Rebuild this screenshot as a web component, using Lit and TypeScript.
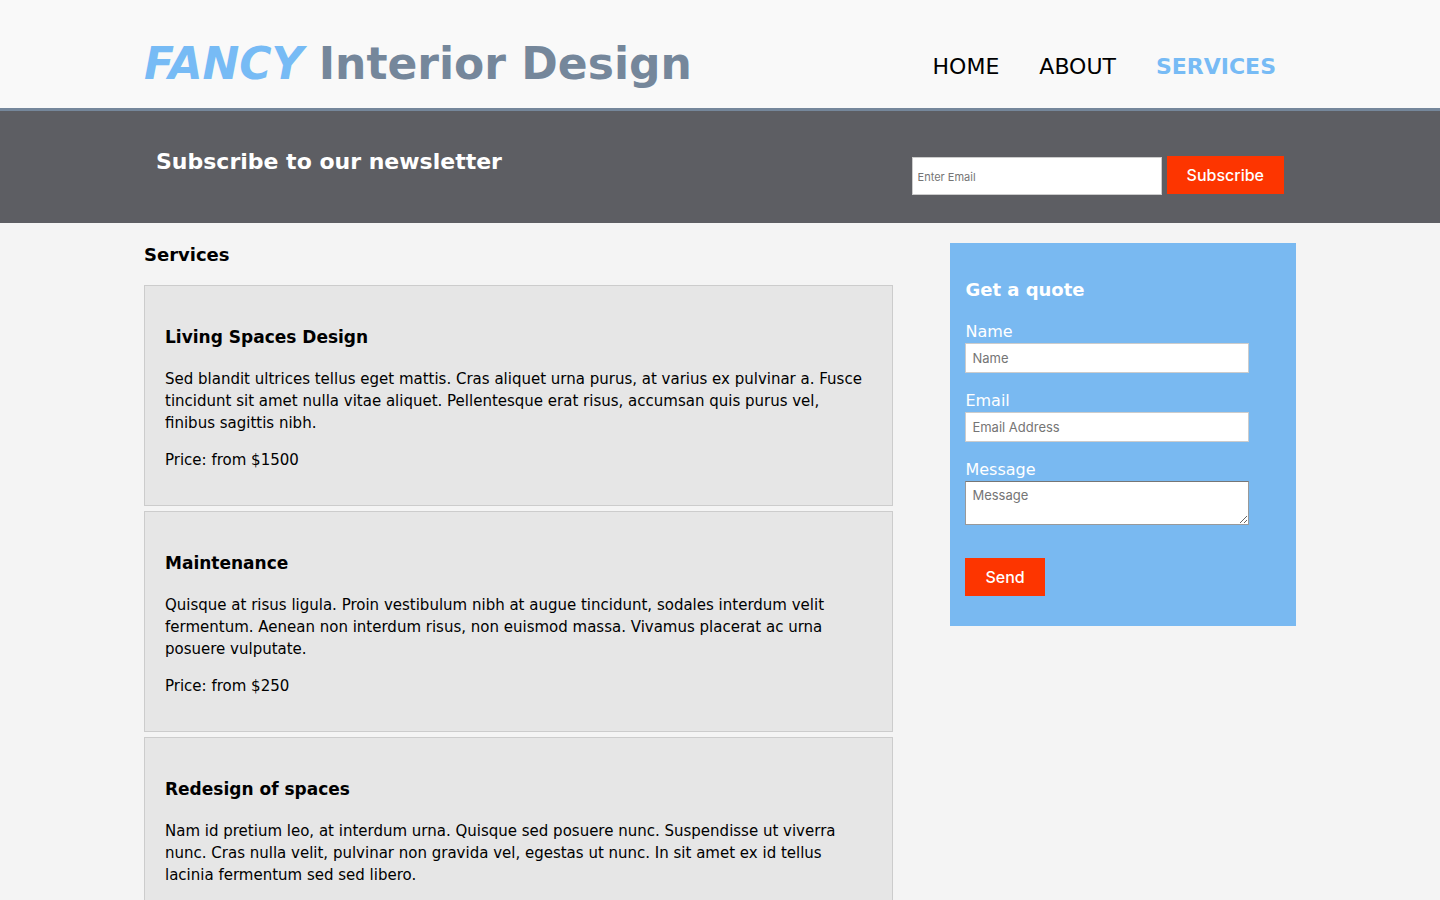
import { LitElement, html, css } from "lit";
import { customElement } from "lit/decorators.js";

interface Service {
  title: string;
  text: string;
  price: string;
}

const services: Service[] = [
  {
    title: "Living Spaces Design",
    text: "Sed blandit ultrices tellus eget mattis. Cras aliquet urna purus, at varius ex pulvinar a. Fusce tincidunt sit amet nulla vitae aliquet. Pellentesque erat risus, accumsan quis purus vel, finibus sagittis nibh.",
    price: "Price: from $1500",
  },
  {
    title: "Maintenance",
    text: "Quisque at risus ligula. Proin vestibulum nibh at augue tincidunt, sodales interdum velit fermentum. Aenean non interdum risus, non euismod massa. Vivamus placerat ac urna posuere vulputate.",
    price: "Price: from $250",
  },
  {
    title: "Redesign of spaces",
    text: "Nam id pretium leo, at interdum urna. Quisque sed posuere nunc. Suspendisse ut viverra nunc. Cras nulla velit, pulvinar non gravida vel, egestas ut nunc. In sit amet ex id tellus lacinia fermentum sed sed libero.",
    price: "",
  },
];

@customElement("app-root")
export class AppRoot extends LitElement {
  static styles = css`
    :host {
      display: block;
      min-height: 100vh;
      background: #f4f4f4;
      color: #000;
      font: 15px/22px Verdana, "DejaVu Sans", sans-serif;
    }
    * {
      box-sizing: border-box;
    }
    h1, h2, h3, p {
      margin: 0;
    }
    .container {
      width: 80%;
      margin: 0 auto;
      display: flex;
      justify-content: space-between;
    }
    header {
      background: #f9f9f9;
      border-bottom: 3px solid #75879b;
      padding: 36px 0 16px;
    }
    .brand {
      font-size: 44px;
      line-height: 56px;
      color: #75879b;
    }
    .brand em {
      color: #77bbf5;
    }
    nav {
      display: flex;
      gap: 40px;
      padding: 17px 20px 0 0;
    }
    nav a {
      font-size: 22px;
      line-height: 28px;
      color: #000;
      text-decoration: none;
    }
    nav a.current {
      color: #77bbf5;
      font-weight: bold;
    }
    .newsletter {
      background: #5d5e63;
      color: #fff;
      padding: 35px 0 28px;
    }
    .newsletter .container {
      padding: 0 12px;
    }
    .newsletter h2 {
      font-size: 22px;
      line-height: 32px;
    }
    .subscribe {
      display: flex;
      gap: 5px;
      padding-top: 10px;
    }
    input, textarea {
      display: block;
      border: 1px solid #ccc;
      border-radius: 0;
      background: #fff;
      font-family: Inter, sans-serif;
      outline: none;
    }
    ::placeholder {
      color: #757575;
      opacity: 1;
    }
    .subscribe input {
      width: 250px;
      height: 38px;
      margin-top: 1px;
      padding: 5px 5px 3px;
      font-size: 11px;
    }
    button {
      height: 38px;
      padding: 0 20px;
      border: 0;
      background: #fd3500;
      color: #fff;
      font: 500 16px/20px Inter, sans-serif;
    }
    main {
      align-items: flex-start;
      padding-top: 20px;
    }
    .services {
      width: 65%;
    }
    .services > h2 {
      font-size: 18px;
      line-height: 24px;
      margin-bottom: 18px;
    }
    .card {
      background: #e6e6e6;
      border: 1px solid #ccc;
      padding: 40px 20px 34px;
      margin-bottom: 5px;
    }
    .card h3 {
      font-size: 17px;
      line-height: 22px;
      margin-bottom: 20px;
    }
    .card p + p {
      margin-top: 15px;
    }
    .quote {
      width: 30%;
      background: #79b9f1;
      color: #fff;
      padding: 36px 15px 30px;
    }
    .quote h2 {
      font-size: 18px;
      line-height: 22px;
      margin-bottom: 20px;
    }
    .quote label {
      display: block;
      font-size: 16px;
      line-height: 22px;
    }
    .quote input, .quote textarea {
      width: 90%;
      font-size: 13px;
    }
    .quote input {
      height: 30px;
      padding: 4px 6px;
      margin-bottom: 17px;
    }
    .quote textarea {
      height: 44px;
      padding: 5px 6px;
      line-height: 16px;
      border-color: #767676 #999 #999;
      margin-bottom: 33px;
    }
  `;

  render() {
    return html`
      <header>
        <div class="container">
          <h1 class="brand"><em>FANCY</em> Interior Design</h1>
          <nav>
            <a href="#home">HOME</a>
            <a href="#about">ABOUT</a>
            <a href="#services" class="current">SERVICES</a>
          </nav>
        </div>
      </header>
      <section class="newsletter">
        <div class="container">
          <h2>Subscribe to our newsletter</h2>
          <form class="subscribe">
            <input type="email" aria-label="Enter Email" placeholder="Enter Email" />
            <button type="button">Subscribe</button>
          </form>
        </div>
      </section>
      <main class="container">
        <section class="services">
          <h2>Services</h2>
          ${services.map(
            (s) => html`
              <article class="card">
                <h3>${s.title}</h3>
                <p>${s.text}</p>
                ${s.price ? html`<p>${s.price}</p>` : ""}
              </article>
            `
          )}
        </section>
        <aside class="quote">
          <h2>Get a quote</h2>
          <form>
            <label for="name">Name</label>
            <input id="name" type="text" placeholder="Name" />
            <label for="email">Email</label>
            <input id="email" type="email" placeholder="Email Address" />
            <label for="message">Message</label>
            <textarea id="message" placeholder="Message"></textarea>
            <button type="button">Send</button>
          </form>
        </aside>
      </main>
    `;
  }
}
